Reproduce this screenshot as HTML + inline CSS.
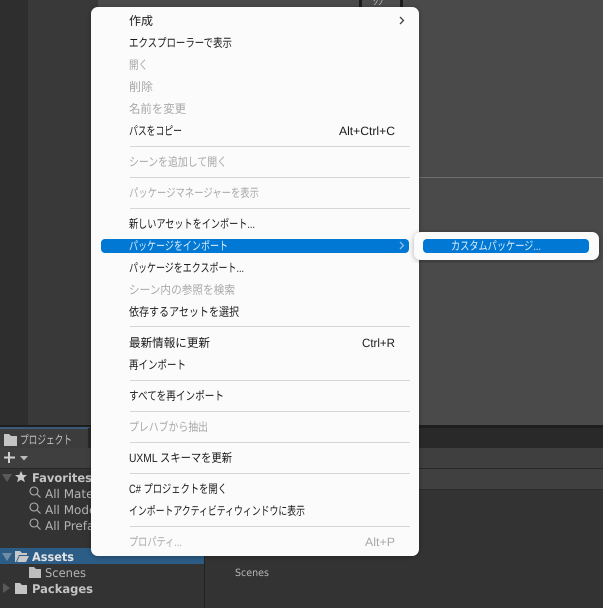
<!DOCTYPE html>
<html><head><meta charset="utf-8">
<style>
html,body{margin:0;padding:0;background:#333;width:603px;height:608px;overflow:hidden}
svg{display:block}
.m{font-family:"Liberation Sans","Noto Sans CJK JP",sans-serif;font-size:12px;fill:#1b1b1b}
.d{fill:#a9a9a9}
.w{fill:#dcecf8}
.t{font-family:"DejaVu Sans",sans-serif;font-size:12px;fill:#b4b4b4}
.b{font-weight:bold;fill:#c4c4c4}
</style></head><body>
<svg width="603" height="608" viewBox="0 0 603 608" xmlns="http://www.w3.org/2000/svg" text-rendering="geometricPrecision">
<defs>
<filter id="s" x="-10%" y="-10%" width="120%" height="120%"><feDropShadow dx="0" dy="1" stdDeviation="3" flood-color="#000" flood-opacity=".3"/></filter>
</defs>
<!-- background -->
<rect width="603" height="608" fill="#333"/>
<rect x="0" y="0" width="28" height="427" fill="#2e2e2e"/>
<rect x="28" y="0" width="70" height="427" fill="#393939"/>
<rect x="98" y="0" width="505" height="427" fill="#4a4a4a"/>
<rect x="419" y="177" width="184" height="1" fill="#6e6e6e"/>
<!-- top button -->
<rect x="359" y="0" width="44" height="8" fill="#1c1c1c"/>
<rect x="362" y="0" width="38" height="8" fill="#4c4c4c"/>
<text x="373" y="5" style="font-family:'Noto Sans CJK JP',sans-serif;font-size:10px;fill:#bbb">ｼﾝ</text>
<!-- bottom bands -->
<rect x="0" y="425" width="603" height="3" fill="#1e1e1e"/>
<rect x="0" y="427" width="90" height="2" fill="#3b5a78"/>
<rect x="88" y="428" width="515" height="20" fill="#292929"/>
<rect x="0" y="429" width="88" height="19" fill="#3c3c3c"/>
<rect x="0" y="448" width="603" height="20" fill="#3f3f3f"/>
<rect x="0" y="468" width="603" height="1" fill="#272727"/>
<rect x="205" y="469" width="398" height="20" fill="#404040"/>
<rect x="205" y="489" width="398" height="1" fill="#2a2a2a"/>
<rect x="204" y="469" width="1" height="139" fill="#222"/>
<rect x="0" y="548" width="204" height="16" fill="#2c5d87"/>
<!-- project tab -->
<path d="M4 434h5l2 2h6v10H4z" fill="#c4c4c4"/>
<text x="20" y="444" textLength="52" lengthAdjust="spacingAndGlyphs" style="font-family:'Liberation Sans','Noto Sans CJK JP',sans-serif;font-size:12px;fill:#c0c0c0">プロジェクト</text>
<path d="M9 452v11M4 457.500h11" stroke="#d0d0d0" stroke-width="2" fill="none"/>
<path d="M20 456h8l-4 4.500z" fill="#bdbdbd"/>
<!-- tree -->
<path d="M2 474h10l-5 8z" fill="#5a5a5a"/>
<path d="M21 471l1.800 4h4.200l-3.300 2.800 1.200 4.400-3.900-2.500-3.900 2.500 1.200-4.400-3.300-2.800h4.200z" fill="#c8c8c8"/>
<text x="32" y="482" class="t b" textLength="60" lengthAdjust="spacingAndGlyphs">Favorites</text>
<g fill="none" stroke="#b0b0b0" stroke-width="1.100">
<circle cx="34" cy="491" r="4"/><path d="M37 494l3.500 3.500"/>
<circle cx="34" cy="507" r="4"/><path d="M37 510l3.500 3.500"/>
<circle cx="34" cy="523" r="4"/><path d="M37 526l3.500 3.500"/>
</g>
<text x="45" y="498" class="t">All Materials</text>
<text x="45" y="514" class="t">All Models</text>
<text x="45" y="530" class="t">All Prefabs</text>
<path d="M2 553h10l-5 8z" fill="#6f8da6"/>
<path d="M15 551h5l2 2h5v2H19l-3 7h-1z" fill="#c8c8c8"/>
<path d="M19.500 556H29l-3 6H17z" fill="#c8c8c8"/>
<text x="32" y="561" class="t b" textLength="42" lengthAdjust="spacingAndGlyphs" style="fill:#e2e2e2">Assets</text>
<path d="M29 567h5l2 2h5v9H29z" fill="#bdbdbd"/>
<text x="45" y="577" class="t" textLength="41" lengthAdjust="spacingAndGlyphs">Scenes</text>
<path d="M3 583l7 5-7 5z" fill="#5a5a5a"/>
<path d="M15 583h5l2 2h5v9H15z" fill="#c4c4c4"/>
<text x="32" y="593" class="t b" textLength="61" lengthAdjust="spacingAndGlyphs">Packages</text>
<text x="235" y="576" class="t" style="font-size:10px;fill:#b8b8b8" textLength="34" lengthAdjust="spacingAndGlyphs">Scenes</text>
<!-- main menu -->
<rect x="91" y="7" width="328" height="549" rx="7" fill="#fbfbfb" filter="url(#s)"/>
<g fill="#d6d6d6">
<rect x="130" y="146" width="280" height="1"/><rect x="130" y="177" width="280" height="1"/>
<rect x="130" y="208" width="280" height="1"/><rect x="130" y="326" width="280" height="1"/>
<rect x="130" y="380" width="280" height="1"/><rect x="130" y="411" width="280" height="1"/>
<rect x="130" y="442" width="280" height="1"/><rect x="130" y="473" width="280" height="1"/>
<rect x="130" y="526" width="280" height="1"/>
</g>
<rect x="101" y="239" width="308" height="14" rx="4" fill="#0078d4"/>
<path d="M400 17l3.500 3.500-3.500 3.500" fill="none" stroke="#444" stroke-width="1.300"/>
<path d="M400 242l3.500 3.500-3.500 3.500" fill="none" stroke="#8fc0e8" stroke-width="1.300"/>
<g class="m">
<text x="129" y="25" class="m" textLength="24" lengthAdjust="spacingAndGlyphs">作成</text>
<text x="129" y="47" class="m" textLength="103" lengthAdjust="spacingAndGlyphs">エクスプローラーで表示</text>
<text x="129" y="69" class="m d" textLength="19" lengthAdjust="spacingAndGlyphs">開く</text>
<text x="129" y="91" class="m d" textLength="24" lengthAdjust="spacingAndGlyphs">削除</text>
<text x="129" y="113" class="m d" textLength="57" lengthAdjust="spacingAndGlyphs">名前を変更</text>
<text x="129" y="135" class="m" textLength="53" lengthAdjust="spacingAndGlyphs">パスをコピー</text>
<text x="339" y="135" class="m" textLength="56" lengthAdjust="spacingAndGlyphs">Alt+Ctrl+C</text>
<text x="129" y="166" class="m d" textLength="98" lengthAdjust="spacingAndGlyphs">シーンを追加して開く</text>
<text x="129" y="197" class="m d" textLength="130" lengthAdjust="spacingAndGlyphs">パッケージマネージャーを表示</text>
<text x="129" y="228" class="m" textLength="126" lengthAdjust="spacingAndGlyphs">新しいアセットをインポート...</text>
<text x="129" y="250" class="m w" textLength="99" lengthAdjust="spacingAndGlyphs">パッケージをインポート</text>
<text x="129" y="272" class="m" textLength="115" lengthAdjust="spacingAndGlyphs">パッケージをエクスポート...</text>
<text x="129" y="294" class="m d" textLength="106" lengthAdjust="spacingAndGlyphs">シーン内の参照を検索</text>
<text x="129" y="316" class="m" textLength="110" lengthAdjust="spacingAndGlyphs">依存するアセットを選択</text>
<text x="129" y="347" class="m" textLength="81" lengthAdjust="spacingAndGlyphs">最新情報に更新</text>
<text x="362" y="347" class="m" textLength="33" lengthAdjust="spacingAndGlyphs">Ctrl+R</text>
<text x="129" y="369" class="m" textLength="57" lengthAdjust="spacingAndGlyphs">再インポート</text>
<text x="129" y="400" class="m" textLength="95" lengthAdjust="spacingAndGlyphs">すべてを再インポート</text>
<text x="129" y="431" class="m d" textLength="79" lengthAdjust="spacingAndGlyphs">プレハブから抽出</text>
<text x="129" y="462" class="m" textLength="103" lengthAdjust="spacingAndGlyphs">UXML スキーマを更新</text>
<text x="129" y="493" class="m" textLength="98" lengthAdjust="spacingAndGlyphs">C# プロジェクトを開く</text>
<text x="129" y="515" class="m" textLength="176" lengthAdjust="spacingAndGlyphs">インポートアクティビティウィンドウに表示</text>
<text x="129" y="546" class="m d" textLength="53" lengthAdjust="spacingAndGlyphs">プロパティ...</text>
<text x="365" y="546" class="m d" textLength="30" lengthAdjust="spacingAndGlyphs">Alt+P</text>
</g>
<!-- submenu -->
<rect x="414" y="232" width="185" height="28" rx="7" fill="#fbfbfb" filter="url(#s)"/>
<rect x="423" y="239" width="166" height="14" rx="4" fill="#0078d4"/>
<text x="451" y="250" class="m w" textLength="90" lengthAdjust="spacingAndGlyphs">カスタムパッケージ...</text>
</svg>
</body></html>
